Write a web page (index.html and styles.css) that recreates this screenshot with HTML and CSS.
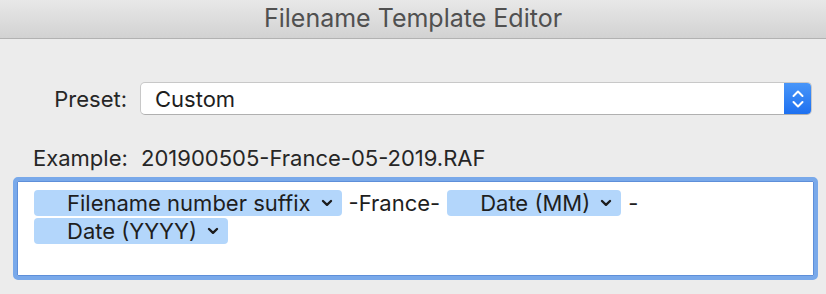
FILE: index.html
```html
<!DOCTYPE html>
<html lang="en">
<head>
    <meta charset="UTF-8">
    <title>Filename Template Editor</title>
    <link rel="stylesheet" href="styles.css">
</head>
<body>
    <div class="window">
        <div class="titlebar">Filename Template Editor</div>

        <div class="content">
            <div class="preset-row">
                <span class="label">Preset:</span>
                <div class="select">
                    <span class="select-value">Custom</span>
                    <span class="stepper">
                        <svg width="14" height="24" viewBox="0 0 14 24">
                            <path d="M2.5 9 L7 4.5 L11.5 9" fill="none" stroke="#fff" stroke-width="2" stroke-linecap="round" stroke-linejoin="round"/>
                            <path d="M2.5 15 L7 19.5 L11.5 15" fill="none" stroke="#fff" stroke-width="2" stroke-linecap="round" stroke-linejoin="round"/>
                        </svg>
                    </span>
                </div>
            </div>

            <div class="example">
                <span class="example-label">Example:</span>
                <span>201900505-France-05-2019.RAF</span>
            </div>

            <div class="template-box">
                <div class="tokens">
                    <span class="token">Filename number suffix <svg class="chev" width="12" height="8" viewBox="0 0 12 8"><path d="M2 2 L6 5.8 L10 2" fill="none" stroke="#1c1c1c" stroke-width="2.4" stroke-linecap="round" stroke-linejoin="round"/></svg></span>
                    <span class="text">-France-</span>
                    <span class="token">Date (MM) <svg class="chev" width="12" height="8" viewBox="0 0 12 8"><path d="M2 2 L6 5.8 L10 2" fill="none" stroke="#1c1c1c" stroke-width="2.4" stroke-linecap="round" stroke-linejoin="round"/></svg></span>
                    <span class="text">-</span>
                    <span class="token">Date (YYYY) <svg class="chev" width="12" height="8" viewBox="0 0 12 8"><path d="M2 2 L6 5.8 L10 2" fill="none" stroke="#1c1c1c" stroke-width="2.4" stroke-linecap="round" stroke-linejoin="round"/></svg></span>
                </div>
            </div>
        </div>
    </div>
</body>
</html>
```

FILE: styles.css
```css
body {
    margin: 0;
    background-color: #ececec;
    font-family: Inter, "Open Sans", "Liberation Sans", sans-serif;
    color: #1e1e1e;
}
.window {
    width: 826px;
    height: 294px;
    overflow: hidden;
}
.titlebar {
    height: 38px;
    line-height: 37px;
    text-align: center;
    font-size: 25px;
    color: #505050;
    background: linear-gradient(#e8e8e8, #d2d2d2);
    border-bottom: 1px solid #b2b2b2;
}
.content {
    padding: 0 8px 0 13px;
}
.preset-row {
    display: flex;
    align-items: center;
    margin-top: 43px;
    height: 33px;
}
.label {
    width: 114px;
    text-align: right;
    font-size: 22px;
    padding-right: 13px;
    color: #262626;
}
.select {
    flex: 1;
    height: 33px;
    display: flex;
    align-items: center;
    background: #fff;
    border: 1px solid #c8c8c8;
    border-bottom-color: #b0b0b0;
    border-radius: 5px;
    box-sizing: border-box;
    margin-right: 6px;
    overflow: hidden;
}
.select-value {
    flex: 1;
    font-size: 22px;
    padding-left: 14px;
    color: #1e1e1e;
}
.stepper {
    width: 28px;
    height: 33px;
    margin: -1px -1px -1px 0;
    display: flex;
    align-items: center;
    justify-content: center;
    background: linear-gradient(#4a97f9, #1c6ff0);
    border-radius: 0 5px 5px 0;
}
.example {
    margin-top: 31px;
    height: 26px;
    line-height: 25px;
    padding-left: 20px;
    font-size: 22px;
    color: #262626;
}
.example-label {
    margin-right: 7px;
}
.template-box {
    margin-top: 5px;
    width: 805px;
    height: 103px;
    box-sizing: border-box;
    border: 4px solid #79a9ea;
    border-radius: 5px;
    background: #fff;
    box-shadow: inset 0 0 0 1px #5e8fd9;
    padding: 9px 17px;
}
.tokens {
    display: flex;
    flex-wrap: wrap;
    align-items: center;
    row-gap: 2px;
    column-gap: 7px;
    font-size: 22px;
}
.token {
    display: inline-flex;
    align-items: center;
    height: 26px;
    padding: 0 9px 0 33px;
    background: #b3d6fb;
    border-radius: 4px;
    color: #1e1e1e;
}
.chev {
    margin-left: 10px;
}
.text {
    color: #1e1e1e;
}
```
